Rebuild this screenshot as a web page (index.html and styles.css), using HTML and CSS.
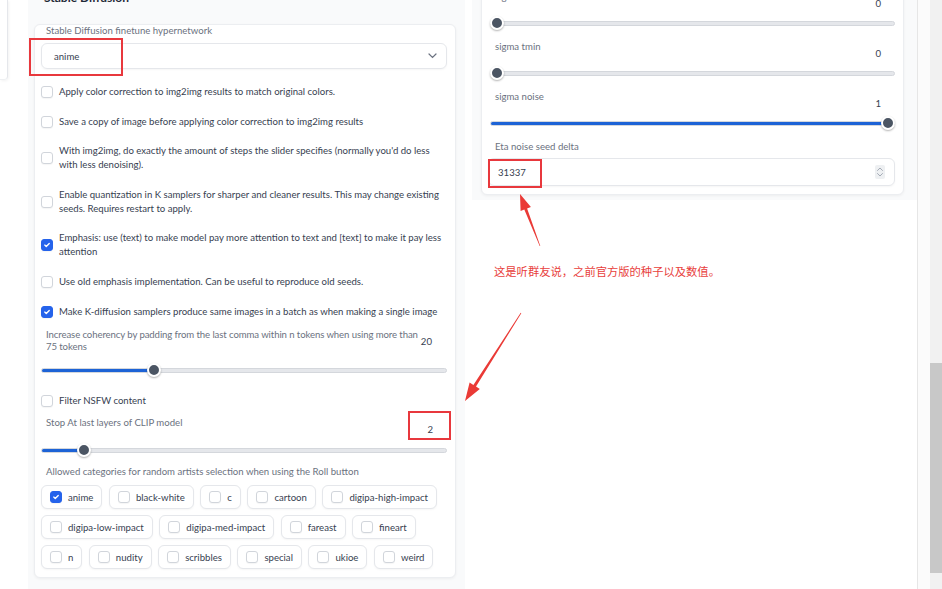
FILE: index.html
```html
<!DOCTYPE html>
<html lang="zh">
<head>
<meta charset="utf-8">
<title>Settings</title>
<link rel="stylesheet" href="styles.css">
</head>
<body>
<div class="screen">
  <div class="viewport">
    <div class="stub"></div>

    <div class="col-left">
      <div class="sd-title">Stable Diffusion</div>
      <div class="card card-left">
        <div class="field-label">Stable Diffusion finetune hypernetwork</div>
        <div class="dropdown">
          <span>anime</span>
          <svg class="chev" width="9" height="6" viewBox="0 0 9 6"><path d="M1 1l3.5 3.5L8 1" stroke="#6b7280" stroke-width="1.2" fill="none" stroke-linecap="round"/></svg>
        </div>

        <div class="checks">
          <div class="check"><span class="box"></span><span>Apply color correction to img2img results to match original colors.</span></div>
          <div class="check"><span class="box"></span><span>Save a copy of image before applying color correction to img2img results</span></div>
          <div class="check"><span class="box"></span><span>With img2img, do exactly the amount of steps the slider specifies (normally you'd do less<br>with less denoising).</span></div>
          <div class="check"><span class="box"></span><span>Enable quantization in K samplers for sharper and cleaner results. This may change existing<br>seeds. Requires restart to apply.</span></div>
          <div class="check"><span class="box on"><svg viewBox="0 0 12 12"><path d="M3.3 6.1l1.8 1.8 3.6-3.8" stroke="#fff" stroke-width="1.6" fill="none" stroke-linecap="round" stroke-linejoin="round"/></svg></span><span>Emphasis: use (text) to make model pay more attention to text and [text] to make it pay less<br>attention</span></div>
          <div class="check"><span class="box"></span><span>Use old emphasis implementation. Can be useful to reproduce old seeds.</span></div>
          <div class="check"><span class="box on"><svg viewBox="0 0 12 12"><path d="M3.3 6.1l1.8 1.8 3.6-3.8" stroke="#fff" stroke-width="1.6" fill="none" stroke-linecap="round" stroke-linejoin="round"/></svg></span><span>Make K-diffusion samplers produce same images in a batch as when making a single image</span></div>
        </div>

        <div class="slider-block coherency">
          <div class="sb-head">
            <div class="field-label two">Increase coherency by padding from the last comma within n tokens when using more than<br>75 tokens</div>
            <div class="sb-val">20</div>
          </div>
          <div class="slider" style="--p:0.27"><div class="track"><div class="fill"></div></div><div class="thumb"></div></div>
        </div>

        <div class="check nsfw"><span class="box"></span><span>Filter NSFW content</span></div>

        <div class="slider-block clip">
          <div class="sb-head">
            <div class="field-label">Stop At last layers of CLIP model</div>
            <div class="sb-val">2</div>
          </div>
          <div class="slider" style="--p:0.092"><div class="track"><div class="fill"></div></div><div class="thumb"></div></div>
        </div>

        <div class="field-label allowed">Allowed categories for random artists selection when using the Roll button</div>
        <div class="chips">
          <div class="chip"><span class="box on"><svg viewBox="0 0 12 12"><path d="M3.3 6.1l1.8 1.8 3.6-3.8" stroke="#fff" stroke-width="1.6" fill="none" stroke-linecap="round" stroke-linejoin="round"/></svg></span>anime</div>
          <div class="chip"><span class="box"></span>black-white</div>
          <div class="chip"><span class="box"></span>c</div>
          <div class="chip"><span class="box"></span>cartoon</div>
          <div class="chip"><span class="box"></span>digipa-high-impact</div>
          <div class="chip"><span class="box"></span>digipa-low-impact</div>
          <div class="chip"><span class="box"></span>digipa-med-impact</div>
          <div class="chip"><span class="box"></span>fareast</div>
          <div class="chip"><span class="box"></span>fineart</div>
          <div class="chip"><span class="box"></span>n</div>
          <div class="chip"><span class="box"></span>nudity</div>
          <div class="chip"><span class="box"></span>scribbles</div>
          <div class="chip"><span class="box"></span>special</div>
          <div class="chip"><span class="box"></span>ukioe</div>
          <div class="chip"><span class="box"></span>weird</div>
        </div>
      </div>
    </div>

    <div class="col-right">
      <div class="card card-right">
        <div class="slider-block rs">
          <div class="sb-head"><div class="field-label">sigma churn</div><div class="sb-val">0</div></div>
          <div class="slider" style="--p:0"><div class="track"><div class="fill"></div></div><div class="thumb"></div></div>
        </div>
        <div class="slider-block rs">
          <div class="sb-head"><div class="field-label">sigma tmin</div><div class="sb-val">0</div></div>
          <div class="slider" style="--p:0"><div class="track"><div class="fill"></div></div><div class="thumb"></div></div>
        </div>
        <div class="slider-block rs">
          <div class="sb-head"><div class="field-label">sigma noise</div><div class="sb-val">1</div></div>
          <div class="slider" style="--p:1"><div class="track"><div class="fill"></div></div><div class="thumb"></div></div>
        </div>
        <div class="field-label">Eta noise seed delta</div>
        <div class="num-input">
          <span>31337</span>
          <span class="spin">
            <svg width="8" height="12" viewBox="0 0 8 12"><path d="M1.5 4.5L4 2l2.5 2.5M1.5 7.5L4 10l2.5-2.5" stroke="#9ca3af" stroke-width="0.9" fill="none" stroke-linecap="round"/></svg>
          </span>
        </div>
      </div>
    </div>
  </div>
  <div class="gutter"></div>
  <div class="scrollbar"><div class="sthumb"></div></div>
</div>

<div class="mark mark-1"></div>
<div class="mark mark-2"></div>
<div class="mark mark-3"></div>
<div class="note">这是听群友说，之前官方版的种子以及数值。</div>
<svg class="arrows" width="942" height="589" viewBox="0 0 942 589">
  <polygon fill="#ea3a36" points="540.3,245.9 527.1,208.4 530.9,206.9 520,194 520.6,210.9 524.3,209.4 539.7,246.1"/>
  <polygon fill="#ea3a36" points="521.3,313.2 476.0,386.6 479.8,389.0 465,401 469.6,382.6 473.4,385.0 520.7,312.8"/>
</svg>
</body>
</html>
```

FILE: styles.css
```css
* { box-sizing: border-box; }
html, body { margin: 0; padding: 0; }
body {
  width: 942px;
  height: 589px;
  overflow: hidden;
  position: relative;
  background: #fff;
  color: #374151;
  font-family: Lato, "Noto Sans", sans-serif;
  font-size: 9.6px;
}

.screen { display: flex; width: 942px; height: 589px; }
.viewport { display: flex; width: 918px; border-right: 1px solid #e6e6e6; flex: none; }

.stub {
  width: 8px; height: 80px; flex: none; margin-right: 20px;
  border-right: 1px solid #e5e7eb; border-bottom: 1px solid #eef0f2;
  border-bottom-right-radius: 4px;
  box-shadow: 1px 1px 3px rgba(0,0,0,.05);
}

.col-left {
  width: 437px; flex: none; margin-top: -14px;
  background: #f9fafb; padding: 0 9px 0 6px;
}
.sd-title {
  font-weight: 700; font-size: 12px; line-height: 16px; color: #1f2937;
  padding: 4px 0 0 10px; height: 38px;
}
.card {
  background: #fff; border: 1px solid #eceef1; border-radius: 6px;
  box-shadow: 0 1px 3px rgba(0,0,0,.05);
}
.card-left { padding: 0 8px 8px 6px; }

.field-label { color: #6b7280; line-height: 12px; padding-left: 5px; }
.field-label.two { line-height: 11.5px; white-space: nowrap; letter-spacing: -0.1px; }

.dropdown {
  margin-top: 6px; height: 26px;
  border: 1px solid #e5e7eb; border-radius: 6px;
  display: flex; align-items: center; justify-content: space-between;
  padding: 0 9px 0 12px;
  box-shadow: 0 1px 2px rgba(0,0,0,.04);
  color: #374151;
}

.checks { display: flex; flex-direction: column; gap: 15.6px; margin-top: 16px; }
.check { display: flex; align-items: center; gap: 6px; line-height: 14px; }

.box {
  width: 12px; height: 12px; flex: none;
  border: 1px solid #d1d5db; border-radius: 3px; background: #fff;
  box-shadow: 0 1px 1px rgba(0,0,0,.04);
  display: inline-flex;
}
.box svg { width: 10px; height: 10px; }
.box.on { background: #2563eb; border-color: #2563eb; }

.slider-block .sb-head { display: flex; justify-content: space-between; align-items: flex-start; }
.sb-val { height: 25px; line-height: 25px; padding-right: 14px; text-align: right; color: #374151; flex: none; }
.coherency .sb-val { padding-right: 15px; }
.coherency { margin-top: 10.5px; }
.coherency .slider { margin-top: 8px; }
.nsfw { margin-top: 16px; }
.clip { margin-top: 9px; }
.allowed { margin-top: 8px; }

.slider { position: relative; height: 16px; display: flex; align-items: center; }
.track {
  flex: 1; height: 5px; border-radius: 3px;
  background: #e5e7eb; border: 1px solid #d4d7dc; position: relative; overflow: hidden;
}
.fill {
  position: absolute; left: 0; top: -1px; bottom: -1px;
  width: calc(7px + var(--p) * (100% - 14px));
  background: #1d63d6;
}
.thumb {
  position: absolute; top: 1px;
  left: calc(var(--p) * (100% - 14px));
  width: 14px; height: 14px; border-radius: 50%;
  background: #4b5563; border: 2px solid #fff;
  box-shadow: 0 1px 2px rgba(0,0,0,.3);
}

.chips { display: flex; flex-wrap: wrap; gap: 6px 6.5px; margin-top: 7px; }
.chip {
  display: flex; align-items: center; gap: 6px; height: 24px; padding: 0 8px;
  border: 1px solid #e5e7eb; border-radius: 6px; background: #fff;
  box-shadow: 0 1px 2px rgba(0,0,0,.04);
}

.col-right {
  width: 445px; flex: none; align-self: flex-start; margin-top: -20px; margin-left: 7px;
  background: #f9fafb; padding: 0 13px 5px 9px;
}
.card-right { padding: 10px 8px 8px; }
.rs { margin-bottom: 10px; }
.rs .slider { margin-top: -1px; }

.num-input {
  margin-top: 5px; margin-left: -2px; height: 28px;
  border: 1px solid #e5e7eb; border-radius: 6px;
  display: flex; align-items: center; justify-content: space-between;
  padding: 0 9px 0 9px;
  box-shadow: 0 1px 2px rgba(0,0,0,.04);
}
.spin {
  width: 10px; height: 14px; background: #eef0f2; border-radius: 2px;
  display: flex; align-items: center; justify-content: center;
}

.gutter { width: 12px; flex: none; background: #fbfbfb; }
.scrollbar { width: 12px; flex: none; background: #f1f1f1; padding-top: 363px; }
.sthumb { height: 210px; background: #c8c8c8; }

.mark { position: absolute; border: 2px solid #e8383d; }
.mark-1 { left: 29px; top: 38px; width: 94px; height: 38px; }
.mark-2 { left: 408px; top: 411px; width: 43px; height: 29px; }
.mark-3 { left: 488px; top: 159px; width: 54px; height: 29px; }

.note {
  position: absolute; left: 494px; top: 263px;
  font-family: "Noto Sans CJK SC", sans-serif; font-size: 11.3px; line-height: 16px;
  color: #e8403c;
}
.arrows { position: absolute; left: 0; top: 0; pointer-events: none; }
```
